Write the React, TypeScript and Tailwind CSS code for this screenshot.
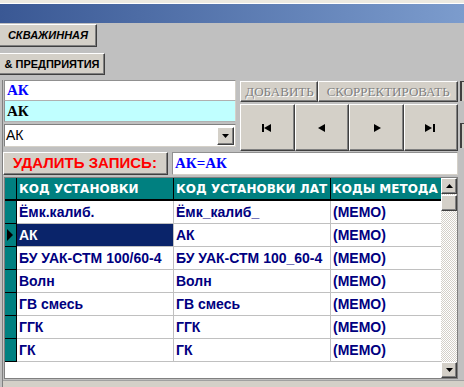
import React from "react";

const rows = [
  { a: "Ёмк.калиб.", b: "Ёмк_калиб_" },
  { a: "АК", b: "АК", selected: true },
  { a: "БУ УАК-СТМ 100/60-4", b: "БУ УАК-СТМ 100_60-4" },
  { a: "Волн", b: "Волн" },
  { a: "ГВ смесь", b: "ГВ смесь" },
  { a: "ГГК", b: "ГГК" },
  { a: "ГК", b: "ГК" },
];

const raised =
  "border border-t-white border-l-white border-r-[#404040] border-b-[#404040] shadow-[inset_-1px_-1px_0_#808080] bg-[#d4d0c8]";

function Tri({ dir }: { dir: "up" | "down" }) {
  return (
    <svg width="7" height="4" viewBox="0 0 7 4">
      {dir === "up" ? <polygon points="3.5,0 7,4 0,4" fill="#000" /> : <polygon points="0,0 7,0 3.5,4" fill="#000" />}
    </svg>
  );
}

function NavIcon({ kind }: { kind: "first" | "prev" | "next" | "last" }) {
  return (
    <svg width="11" height="8" viewBox="0 0 11 8">
      {kind === "first" && (
        <>
          <rect x="0" y="0" width="2" height="8" fill="#000" />
          <polygon points="2,4 9,0 9,8" fill="#000" />
        </>
      )}
      {kind === "prev" && <polygon points="1,4 8,0 8,8" fill="#000" />}
      {kind === "next" && <polygon points="3,0 10,4 3,8" fill="#000" />}
      {kind === "last" && (
        <>
          <polygon points="0,0 7,4 0,8" fill="#000" />
          <rect x="8" y="0" width="2" height="8" fill="#000" />
        </>
      )}
    </svg>
  );
}

export default function App() {
  return (
    <div className="w-[464px] h-[387px] overflow-hidden bg-[#c0c0c0] flex flex-col font-['Liberation_Sans',Arial,sans-serif]">
      {/* window chrome */}
      <div className="h-[4px] bg-[#ece9e0] border-b border-white shrink-0" />
      <div className="h-[19px] shrink-0 bg-gradient-to-r from-[#3a5894] to-[#7c9ccd]" />

      {/* top buttons */}
      <div className="flex flex-col items-start shrink-0">
        <div className={`${raised} border-l-0 mt-[1px] w-[97px] h-[23px] flex items-center justify-center text-[11px] font-bold italic text-black`}>
          СКВАЖИННАЯ
        </div>
        <div className={`${raised} border-l-0 mt-[6px] w-[105px] h-[22px] flex items-center justify-center text-[11px] font-bold text-black`}>
          &amp; ПРЕДПРИЯТИЯ
        </div>
      </div>

      {/* form body */}
      <div className="flex-1 flex flex-col ml-[2px] border-l border-[#808080] mt-[5px]">
        <div className="flex h-[72px] shrink-0">
          <div className="w-[234px] pl-[1px] flex flex-col">
            <div className="h-[21px] bg-white border border-[#909090] border-r-[#d4d0c8] border-b-[#b0b0b0] flex items-center pl-[2px] font-['Liberation_Serif',serif] font-bold text-[15px] text-[#0000ff]">
              АК
            </div>
            <div className="h-[21px] bg-[#c0ffff] border border-t-0 border-[#909090] border-r-[#d4d0c8] border-b-[#b0b0b0] flex items-center pl-[2px] font-['Liberation_Serif',serif] font-bold text-[15px] text-black">
              АК
            </div>
            <div className="h-[23px] mt-[2px] bg-white border border-[#808080] border-r-[#d4d0c8] border-b-[#d4d0c8] flex items-center">
              <span className="flex-1 pl-[1px] text-[14px] text-black">АК</span>
              <div className={`${raised} w-[17px] h-[18px] mr-[1px] flex items-center justify-center`}>
                <Tri dir="down" />
              </div>
            </div>
          </div>

          <div className="ml-[4px] pt-[1px] flex flex-col w-[218px]">
            <div className="flex h-[21px]">
              <div className={`${raised} w-[78px] flex items-center justify-center font-['Liberation_Serif',serif] text-[13px] text-[#808080] [text-shadow:1px_1px_0_#fff]`}>
                ДОБАВИТЬ
              </div>
              <div className={`${raised} flex-1 flex items-center justify-center font-['Liberation_Serif',serif] text-[13px] text-[#808080] [text-shadow:1px_1px_0_#fff]`}>
                СКОРРЕКТИРОВАТЬ
              </div>
            </div>
            <div className="flex h-[47px] mt-[2px]">
              {(["first", "prev", "next", "last"] as const).map((k) => (
                <div key={k} className={`${raised} flex-1 flex items-center justify-center`}>
                  <NavIcon kind={k} />
                </div>
              ))}
            </div>
          </div>

          <div className="ml-[2px] flex flex-col pt-[1px]">
            <div className="h-[20px] w-[4px] border-l-2 border-t border-[#404040] bg-[#d4d0c8]" />
            <div className="h-[25px] w-[4px] mt-[22px] border-l-2 border-t border-[#404040] bg-[#d4d0c8]" />
          </div>
        </div>

        {/* delete row */}
        <div className="flex h-[23px] mt-[-0px] shrink-0">
          <div className={`${raised} w-[165px] flex items-center pl-[9px] text-[15px] font-bold text-[#ff0000]`}>
            УДАЛИТЬ ЗАПИСЬ:
          </div>
          <div className="ml-[4px] w-[286px] bg-white border border-[#909090] border-r-[#d4d0c8] border-b-[#d4d0c8] flex items-center pl-[2px] font-['Liberation_Serif',serif] font-bold text-[15px] text-[#0000ff]">
            АК=АК
          </div>
        </div>

        {/* grid */}
        <div className="mt-[2px] ml-[1px] w-[454px] h-[202px] shrink-0 bg-white border border-[#808080] flex">
          <div className="w-[436px] flex flex-col">
            <div className="h-[23px] flex bg-[#008080] border-b-2 border-black font-['DejaVu_Sans',Verdana,sans-serif] font-bold text-[12px] text-white">
              <div className="w-[12px] border-r border-black" />
              <div className="w-[157px] border-r border-black pl-[2px] flex items-center whitespace-nowrap overflow-hidden">КОД УСТАНОВКИ</div>
              <div className="w-[157px] border-r border-black pl-[2px] flex items-center whitespace-nowrap overflow-hidden">КОД УСТАНОВКИ ЛАТ</div>
              <div className="flex-1 pl-[1px] flex items-center whitespace-nowrap overflow-hidden">КОДЫ МЕТОДА</div>
            </div>
            {rows.map((r) => (
              <div key={r.a} className="h-[23px] flex text-[14px] font-bold text-[#000080]">
                <div className="w-[12px] bg-[#008080] border-r border-b border-black flex items-center pl-[2px]">
                  {r.selected && (
                    <svg width="6" height="12" viewBox="0 0 6 12">
                      <polygon points="0,0 6,6 0,12" fill="#000" />
                    </svg>
                  )}
                </div>
                <div
                  className={`w-[157px] border-r border-b border-[#c0c0c0] pl-[2px] flex items-center whitespace-nowrap overflow-hidden ${
                    r.selected ? "bg-[#0a246a] text-white" : ""
                  }`}
                >
                  {r.a}
                </div>
                <div className="w-[157px] border-r border-b border-[#c0c0c0] pl-[2px] flex items-center whitespace-nowrap overflow-hidden">
                  {r.b}
                </div>
                <div className="flex-1 border-b border-[#c0c0c0] pl-[2px] flex items-center whitespace-nowrap">(МЕМО)</div>
              </div>
            ))}
          </div>

          {/* scrollbar */}
          <div className="w-[16px] flex flex-col bg-[repeating-conic-gradient(#d4d0c8_0_25%,#ffffff_0_50%)] bg-[length:2px_2px]">
            <div className={`${raised} h-[16px] flex items-center justify-center shrink-0`}>
              <Tri dir="up" />
            </div>
            <div className={`${raised} h-[16px] mt-[1px] shrink-0`} />
            <div className="flex-1" />
            <div className={`${raised} h-[16px] flex items-center justify-center shrink-0`}>
              <Tri dir="down" />
            </div>
          </div>
        </div>

        <div className="flex-1 mt-[1px] bg-[#d4d0c8] border-t border-[#a0a0a0]" />
      </div>
    </div>
  );
}
